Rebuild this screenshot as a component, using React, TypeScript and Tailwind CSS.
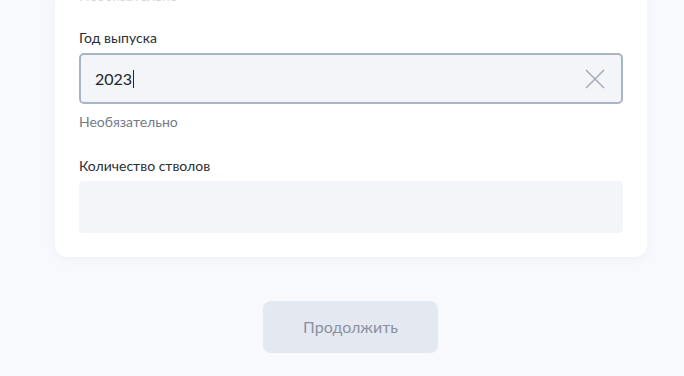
import React from "react";

export default function App() {
  return (
    <div
      className="h-[376px] w-[684px] overflow-hidden bg-[#f7f9fd]"
      style={{ fontFamily: "Lato, 'Noto Sans', sans-serif" }}
    >
      <div className="mx-[55px] mt-[-13px] w-[592px] rounded-xl bg-white px-6 pb-6 shadow-[0_2px_10px_rgba(120,140,180,0.08)]">
        <div className="text-[14px] leading-[18px] text-[#d3d7de]">Необязательно</div>
        <div className="mt-[24px] text-[14px] leading-[18px] text-[#2a2e35]">Год выпуска</div>
        <div className="mt-[6px] flex h-[51px] items-center rounded-[5px] border-2 border-[#a9b4c7] bg-[#f3f5f9] pl-[14px] pr-[16px]">
          <span className="text-[16px] leading-[20px] text-[#22262c]">2023</span>
          <span className="ml-[1px] h-[18px] w-[1px] bg-[#22262c]" />
          <div className="flex-1" />
          <svg width="20" height="20" viewBox="0 0 20 20" fill="none">
            <path d="M1 1L19 19M19 1L1 19" stroke="#a3abb8" strokeWidth="1.5" />
          </svg>
        </div>
        <div className="mt-[9px] text-[14px] leading-[18px] text-[#737b88]">Необязательно</div>
        <div className="mt-[26px] text-[14px] leading-[18px] text-[#2a2e35]">Количество стволов</div>
        <div className="mt-[6px] h-[52px] rounded-[4px] bg-[#f3f5f8]" />
      </div>
      <div className="mt-[44px] flex justify-center">
        <button className="ml-[17px] h-[52px] w-[175px] rounded-lg bg-[#e4e8f1] text-[16px] text-[#8a919e]">
          Продолжить
        </button>
      </div>
    </div>
  );
}
